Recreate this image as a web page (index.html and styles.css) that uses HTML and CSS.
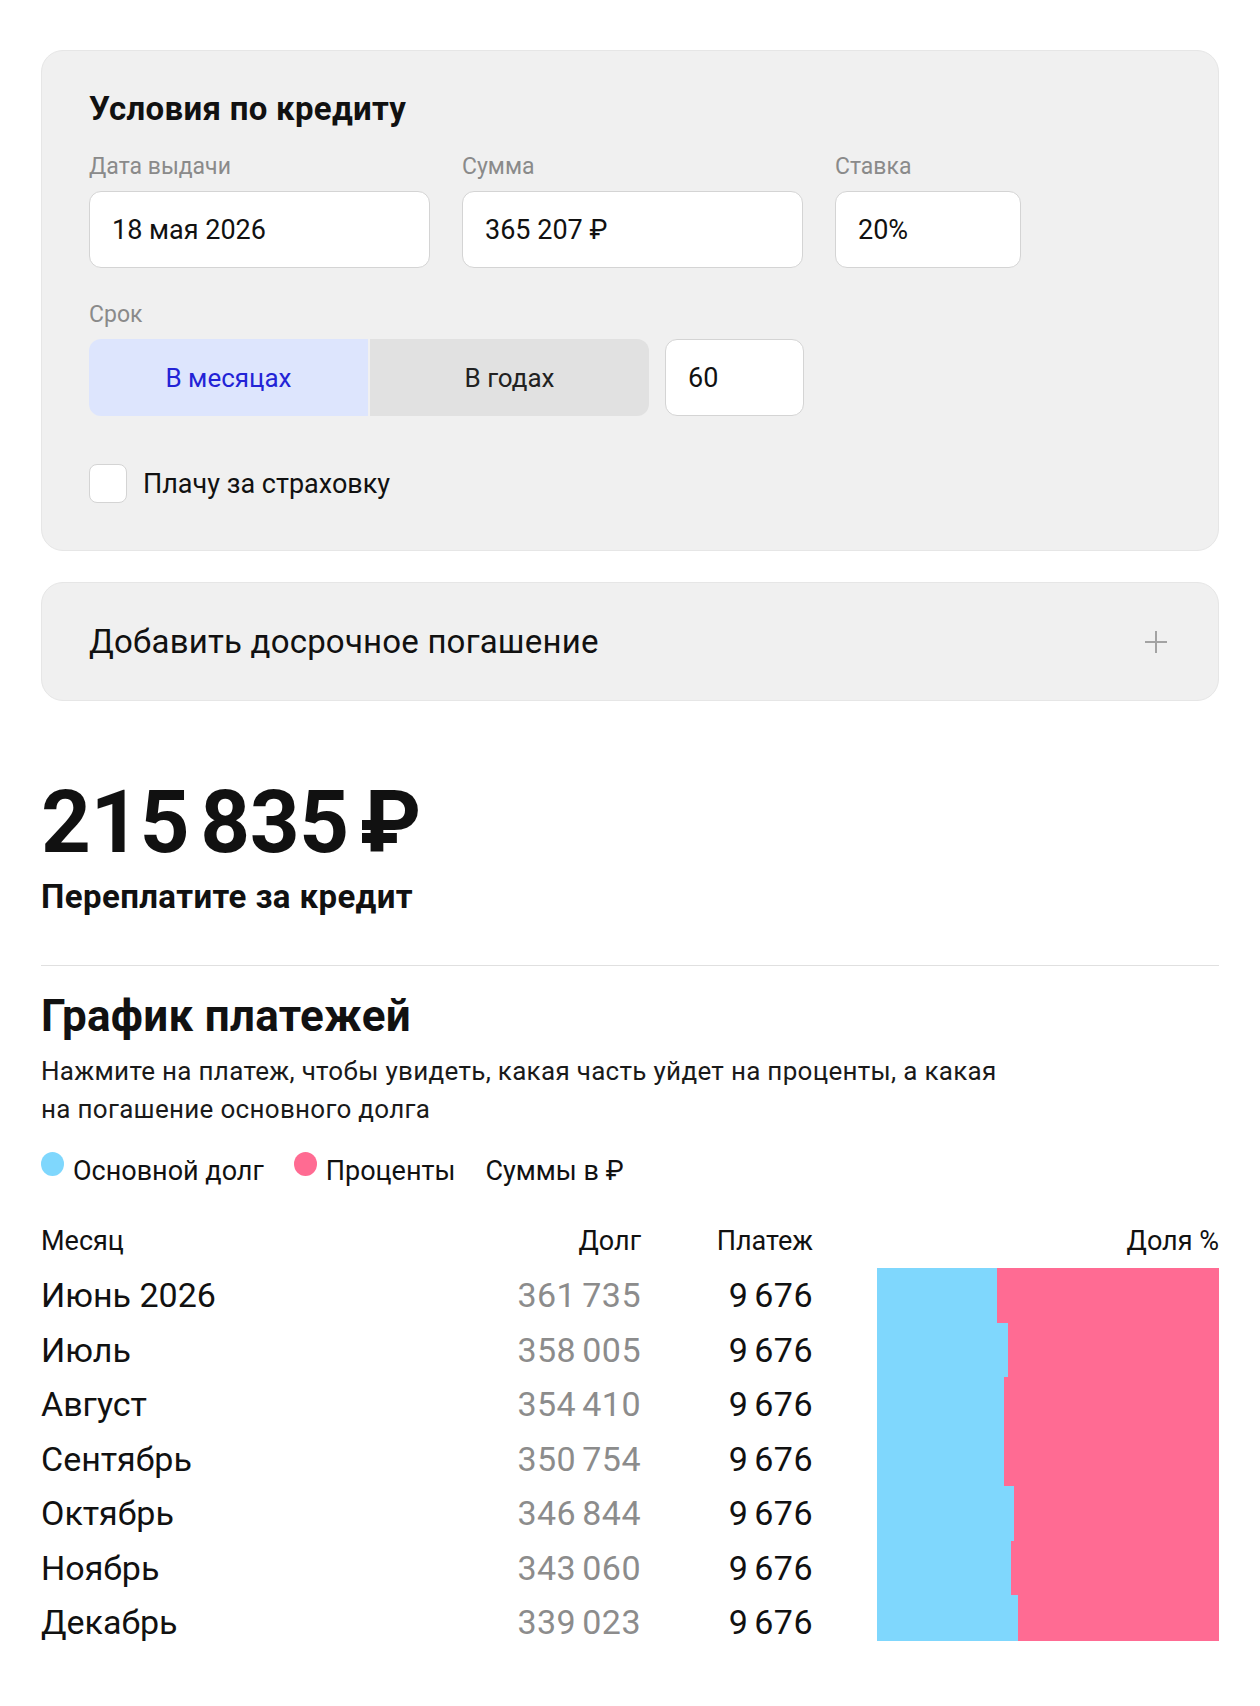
FILE: index.html
```html
<!DOCTYPE html>
<html lang="ru">
  <head>
    <meta charset="utf-8">
    <title>Кредитный калькулятор</title>
    <link rel="stylesheet" href="styles.css">
  </head>
  <body>
    <div class="page">
      <section class="card terms">
        <h2 class="card-title">Условия по кредиту</h2>

        <div class="fields">
          <div class="field">
            <div class="field-label">Дата выдачи</div>
            <div class="input input-wide">18 мая 2026</div>
          </div>
          <div class="field">
            <div class="field-label">Сумма</div>
            <div class="input input-wide">365 207 ₽</div>
          </div>
          <div class="field">
            <div class="field-label">Ставка</div>
            <div class="input input-rate">20%</div>
          </div>
        </div>

        <div class="term">
          <div class="field-label">Срок</div>
          <div class="term-row">
            <div class="switch">
              <div class="switch-option active">В месяцах</div>
              <div class="switch-option">В годах</div>
            </div>
            <div class="input input-term">60</div>
          </div>
        </div>

        <label class="check-row">
          <span class="checkbox"></span>
          <span>Плачу за страховку</span>
        </label>
      </section>

      <section class="card early">
        <span>Добавить досрочное погашение</span>
        <svg class="plus" width="22" height="22" viewBox="0 0 22 22">
          <path d="M11 0v22M0 11h22" stroke="#a3a3a3" stroke-width="2" fill="none"/>
        </svg>
      </section>

      <div class="total">215 835 ₽</div>
      <div class="total-caption">Переплатите за кредит</div>

      <div class="divider"></div>

      <h2 class="schedule-title">График платежей</h2>
      <p class="schedule-hint">Нажмите на платеж, чтобы увидеть, какая часть уйдет на проценты, а какая<br>на погашение основного долга</p>

      <div class="legend">
        <span class="legend-item"><span class="dot dot-main"></span>Основной долг</span>
        <span class="legend-item"><span class="dot dot-percent"></span>Проценты</span>
        <span class="legend-item">Суммы в ₽</span>
      </div>

      <div class="schedule">
        <div class="schedule-table">
          <div class="row head">
            <span class="col-month">Месяц</span>
            <span class="col-debt">Долг</span>
            <span class="col-pay">Платеж</span>
          </div>
          <div class="row">
            <span class="col-month">Июнь 2026</span>
            <span class="col-debt num">361 735</span>
            <span class="col-pay num">9 676</span>
          </div>
          <div class="row">
            <span class="col-month">Июль</span>
            <span class="col-debt num">358 005</span>
            <span class="col-pay num">9 676</span>
          </div>
          <div class="row">
            <span class="col-month">Август</span>
            <span class="col-debt num">354 410</span>
            <span class="col-pay num">9 676</span>
          </div>
          <div class="row">
            <span class="col-month">Сентябрь</span>
            <span class="col-debt num">350 754</span>
            <span class="col-pay num">9 676</span>
          </div>
          <div class="row">
            <span class="col-month">Октябрь</span>
            <span class="col-debt num">346 844</span>
            <span class="col-pay num">9 676</span>
          </div>
          <div class="row">
            <span class="col-month">Ноябрь</span>
            <span class="col-debt num">343 060</span>
            <span class="col-pay num">9 676</span>
          </div>
          <div class="row">
            <span class="col-month">Декабрь</span>
            <span class="col-debt num">339 023</span>
            <span class="col-pay num">9 676</span>
          </div>
        </div>

        <div class="share">
          <div class="share-head">Доля %</div>
          <div class="share-chart">
            <div class="bar"><div class="bar-main" style="width: 35.1%"></div></div>
            <div class="bar"><div class="bar-main" style="width: 38.2%"></div></div>
            <div class="bar"><div class="bar-main" style="width: 37.0%"></div></div>
            <div class="bar"><div class="bar-main" style="width: 37.0%"></div></div>
            <div class="bar"><div class="bar-main" style="width: 40.1%"></div></div>
            <div class="bar"><div class="bar-main" style="width: 39.2%"></div></div>
            <div class="bar"><div class="bar-main" style="width: 41.1%"></div></div>
          </div>
        </div>
      </div>
    </div>
  </body>
</html>
```

FILE: styles.css
```css
body {
    margin: 0;
    font-family: Roboto, "Noto Sans", sans-serif;
    color: #111;
    background: #fff;
}

.page {
    padding: 50px 41px 40px;
}

/* cards */

.card {
    background-color: #f0f0f0;
    border: 1px solid #e6e6e6;
    border-radius: 22px;
}

.terms {
    padding: 38px 48px 47px 47px;
}

.card-title {
    margin: 0;
    font-size: 33px;
    line-height: 40px;
    font-weight: 700;
    letter-spacing: 0.3px;
}

.fields {
    display: flex;
    gap: 32px;
    margin-top: 26px;
}

.field-label {
    font-size: 23px;
    line-height: 24px;
    color: #8a8a8a;
    margin-bottom: 12px;
}

.input {
    box-sizing: border-box;
    height: 77px;
    display: flex;
    align-items: center;
    padding: 0 22px;
    background: #fff;
    border: 1px solid #d4d4d4;
    border-radius: 12px;
    font-size: 27px;
}

.input-wide {
    width: 341px;
}

.input-rate {
    width: 186px;
}

.input-term {
    width: 139px;
}

.term {
    margin-top: 35px;
}

.term-row {
    display: flex;
    gap: 16px;
}

.switch {
    display: flex;
    gap: 2px;
    width: 560px;
    height: 77px;
    border-radius: 12px;
    overflow: hidden;
}

.switch-option {
    flex: 1;
    display: flex;
    align-items: center;
    justify-content: center;
    background: #e1e1e1;
    font-size: 26px;
    color: #222;
}

.switch-option.active {
    background: #dde5fd;
    color: #2323d6;
}

.check-row {
    display: flex;
    align-items: center;
    gap: 16px;
    margin-top: 48px;
    font-size: 27px;
}

.checkbox {
    box-sizing: border-box;
    width: 38px;
    height: 39px;
    background: #fff;
    border: 1px solid #d4d4d4;
    border-radius: 8px;
}

.early {
    box-sizing: border-box;
    height: 119px;
    margin-top: 31px;
    padding: 0 51px 0 47px;
    display: flex;
    align-items: center;
    justify-content: space-between;
    font-size: 33px;
    letter-spacing: 0.2px;
}

/* overpayment */

.total {
    margin-top: 78px;
    font-size: 87px;
    line-height: 86px;
    font-weight: 700;
    letter-spacing: -0.5px;
    word-spacing: -10px;
}

.total-caption {
    margin-top: 14px;
    font-size: 33px;
    line-height: 36px;
    font-weight: 700;
    letter-spacing: 0.4px;
}

.divider {
    margin-top: 50px;
    height: 1px;
    background: #e0e0e0;
}

/* schedule */

.schedule-title {
    margin: 26px 0 0;
    font-size: 44px;
    line-height: 48px;
    font-weight: 700;
    letter-spacing: 0.3px;
}

.schedule-hint {
    margin: 12px 0 0;
    font-size: 26px;
    line-height: 38px;
    letter-spacing: 0.3px;
    color: #1a1a1a;
}

.legend {
    display: flex;
    gap: 30px;
    margin-top: 28px;
    font-size: 27px;
    line-height: 30px;
}

.legend-item {
    display: flex;
    align-items: center;
    gap: 9px;
}

.dot {
    width: 23px;
    height: 24px;
    border-radius: 50%;
    transform: translateY(-7px);
}

.dot-main {
    background: #7fd7fd;
}

.dot-percent {
    background: #ff6b92;
}

.schedule {
    display: flex;
    margin-top: 28px;
}

.schedule-table {
    width: 772px;
}

.row {
    display: grid;
    grid-template-columns: 447px 153px 172px;
    align-items: center;
    height: 54.5px;
    font-size: 34px;
}

.row.head {
    height: 54px;
    font-size: 27px;
}

.col-debt,
.col-pay {
    text-align: right;
}

.num {
    letter-spacing: 0.5px;
    word-spacing: -3px;
}

.row .col-debt.num {
    color: #8c8c8c;
}

.share {
    flex: 1;
    padding-left: 64px;
}

.share-head {
    height: 54px;
    display: flex;
    align-items: center;
    justify-content: flex-end;
    font-size: 27px;
}

.share-chart {
    height: 373px;
    overflow: hidden;
}

.bar {
    height: 54.5px;
    background: #ff6b93;
}

.bar-main {
    height: 100%;
    background: #7fd7fd;
}
```
